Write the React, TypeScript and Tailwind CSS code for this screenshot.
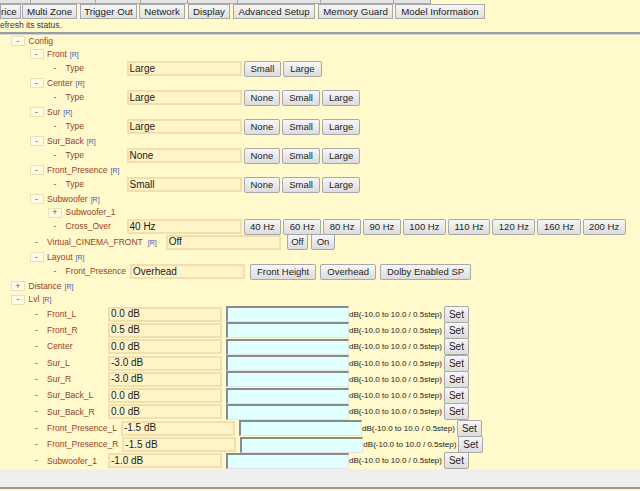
import type { ReactNode } from "react";
import { twMerge } from "tailwind-merge";

const pad: Record<number, string> = {
  0: "pl-[11px]",
  1: "pl-[29.5px]",
  2: "pl-[48px]",
};

// cells of the tab row that is scrolled off the top
const topCells = ["w-[31px]", "w-[65px]", "w-[45px]", "w-[47px]", "w-[50px]", "w-[83px]", "w-[73px]", "w-[37px]"];

const tabs = [
  { t: "rice", cls: "w-[21px] justify-start pl-0" },
  { t: "Multi Zone", cls: "ml-[1px] w-[55px]" },
  { t: "Trigger Out", cls: "ml-[3px] w-[57px]" },
  { t: "Network", cls: "ml-[2px] w-[46px]" },
  { t: "Display", cls: "ml-[3px] w-[42px]" },
  { t: "Advanced Setup", cls: "ml-[3px] w-[82px]" },
  { t: "Memory Guard", cls: "ml-[3px] w-[75px]" },
  { t: "Model Information", cls: "ml-[2px] w-[90px]" },
];

const labelCls = "text-[8.5px] leading-none text-[#96421f]";

function Marker({ sign, boxed }: { sign: string; boxed?: boolean }) {
  return (
    <span
      className={twMerge(
        "flex h-[10px] w-[14px] shrink-0 items-center justify-center text-[9px] leading-none text-[#96421f]",
        boxed && "border border-[#e9dfba] bg-[#fffbe4]"
      )}
    >
      {sign}
    </span>
  );
}

function R({ cls = "" }: { cls?: string }) {
  return <span className={twMerge("ml-[3px] text-[7px] leading-none text-[#3b5bb5]", cls)}>[R]</span>;
}

function Value({ children, cls = "" }: { children: ReactNode; cls?: string }) {
  return (
    <span
      className={twMerge(
        "ml-[4px] flex h-[15px] w-[115px] shrink-0 items-center border-2 border-[#f1dfae] bg-[#fff4c8] pl-[1px] text-[10px] leading-none text-[#1a1a1a]",
        cls
      )}
    >
      {children}
    </span>
  );
}

function Btn({ children, cls = "" }: { children: ReactNode; cls?: string }) {
  return (
    <button
      className={twMerge(
        "flex h-[16px] shrink-0 items-center rounded-[2px] border border-[#a8a8a8] bg-linear-to-b from-[#f7f7f7] to-[#dcdcdc] px-[6px] text-[9.5px] leading-none text-[#1f1f1f]",
        cls
      )}
    >
      {children}
    </button>
  );
}

function Header({ level, sign, label, h, r = true }: { level: number; sign: string; label: string; h: string; r?: boolean }) {
  return (
    <div className={`flex items-center ${pad[level]} ${h}`}>
      <Marker sign={sign} boxed />
      <span className={`ml-[3.5px] ${labelCls}`}>{label}</span>
      {r && <R />}
    </div>
  );
}

function Field({
  label,
  value,
  buttons,
  h = "h-[15px]",
  group = "ml-[2px] gap-[2px]",
  btn = "",
}: {
  label: string;
  value: string;
  buttons: string[];
  h?: string;
  group?: string;
  btn?: string;
}) {
  return (
    <div className={`flex items-center ${pad[2]} ${h}`}>
      <Marker sign="-" />
      <span className={`ml-[3.5px] min-w-[57px] ${labelCls}`}>{label}</span>
      <Value>{value}</Value>
      <div className={`flex ${group}`}>
        {buttons.map((b) => (
          <Btn key={b} cls={btn}>
            {b}
          </Btn>
        ))}
      </div>
    </div>
  );
}

function Level({ label, value }: { label: string; value: string }) {
  return (
    <div className={`flex h-[16.3px] items-center ${pad[1]}`}>
      <Marker sign="-" />
      <span className={`ml-[3.5px] min-w-[57px] ${labelCls}`}>{label}</span>
      <Value cls="w-[114px]">{value}</Value>
      <span className="ml-[4px] h-[16px] w-[123px] shrink-0 border-t-2 border-l-2 border-r border-b border-t-[#8a8a8a] border-l-[#8a8a8a] border-r-[#e4e4e4] border-b-[#e4e4e4] bg-[#e0ffff]" />
      <span className="mt-[1px] text-[8px] leading-none text-[#222]">dB(-10.0 to 10.0 / 0.5step)</span>
      <Btn cls="ml-[2px] h-[17px] px-[4px] text-[10px]">Set</Btn>
    </div>
  );
}

const speakers = [
  { name: "Front", value: "Large", buttons: ["Small", "Large"] },
  { name: "Center", value: "Large", buttons: ["None", "Small", "Large"] },
  { name: "Sur", value: "Large", buttons: ["None", "Small", "Large"] },
  { name: "Sur_Back", value: "None", buttons: ["None", "Small", "Large"] },
  { name: "Front_Presence", value: "Small", buttons: ["None", "Small", "Large"] },
];

const crossOver = ["40 Hz", "60 Hz", "80 Hz", "90 Hz", "100 Hz", "110 Hz", "120 Hz", "160 Hz", "200 Hz"];

const levels = [
  ["Front_L", "0.0 dB"],
  ["Front_R", "0.5 dB"],
  ["Center", "0.0 dB"],
  ["Sur_L", "-3.0 dB"],
  ["Sur_R", "-3.0 dB"],
  ["Sur_Back_L", "0.0 dB"],
  ["Sur_Back_R", "0.0 dB"],
  ["Front_Presence_L", "-1.5 dB"],
  ["Front_Presence_R", "-1.5 dB"],
  ["Subwoofer_1", "-1.0 dB"],
];

export default function App() {
  return (
    <div className="min-h-screen w-full overflow-hidden bg-[#fff9cb] font-['Liberation_Sans',Arial,sans-serif]">
      {/* tab rows */}
      <div className="flex h-[4px]">
        {topCells.map((w, i) => (
          <span key={i} className={`${w} border-r border-b border-[#a8a8a8] bg-[#e4e4e4]`} />
        ))}
      </div>
      <div className="flex h-[15px]">
        {tabs.map((tab) => (
          <span
            key={tab.t}
            className={twMerge(
              "flex h-[15px] shrink-0 items-center justify-center border border-[#a8a8a8] bg-linear-to-b from-[#f6f6f6] to-[#e0e0e0] text-[9.7px] leading-none text-[#222]",
              tab.cls
            )}
          >
            {tab.t}
          </span>
        ))}
      </div>
      <div className="flex h-[13px] items-center text-[8.5px] leading-none text-[#3a3a3a]">efresh its status.</div>
      <div className="h-[3px] border-t-2 border-[#9c9c9c] bg-[#d4d4d4]" />

      {/* tree */}
      <div className="h-[434px]">
        <Header level={0} sign="-" label="Config" h="h-[12px]" r={false} />
        {speakers.map((s) => (
          <div key={s.name}>
            <Header level={1} sign="-" label={s.name} h="h-[14px]" />
            <Field label="Type" value={s.value} buttons={s.buttons} />
          </div>
        ))}
        <Header level={1} sign="-" label="Subwoofer" h="h-[14px]" />
        <Header level={2} sign="+" label="Subwoofer_1" h="h-[13px]" r={false} />
        <Field label="Cross_Over" value="40 Hz" buttons={crossOver} group="ml-[2px] gap-[2px]" btn="px-[5.5px]" />
        <div className={`flex h-[16px] items-center ${pad[1]}`}>
          <Marker sign="-" />
          <span className={`ml-[3.5px] ${labelCls}`}>Virtual_CINEMA_FRONT</span>
          <R cls="ml-[5px]" />
          <Value cls="ml-[9px] w-[115px]">Off</Value>
          <div className="ml-[6px] flex gap-[3px]">
            <Btn cls="px-[3.5px]">Off</Btn>
            <Btn cls="px-[4.5px]">On</Btn>
          </div>
        </div>
        <Header level={1} sign="-" label="Layout" h="h-[14px]" />
        <Field
          label="Front_Presence"
          value="Overhead"
          buttons={["Front Height", "Overhead", "Dolby Enabled SP"]}
          group="ml-[5px] gap-[4px]"
        />
        <Header level={0} sign="+" label="Distance" h="h-[14px]" />
        <Header level={0} sign="-" label="Lvl" h="h-[13px]" />
        {levels.map(([l, v]) => (
          <Level key={l} label={l} value={v} />
        ))}
      </div>

      {/* bottom frame edge */}
      <div className="h-[18px] bg-[#efefef]" />
      <div className="h-[2px] bg-[#9a9a9a]" />
    </div>
  );
}
